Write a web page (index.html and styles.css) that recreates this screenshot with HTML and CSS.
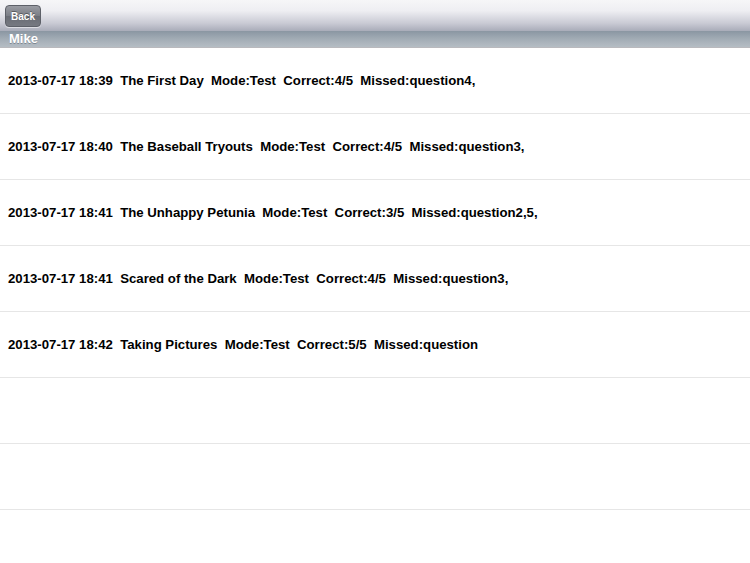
FILE: index.html
```html
<!DOCTYPE html>
<html>
<head>
<meta charset="utf-8">
<link rel="stylesheet" href="styles.css">
</head>
<body>
<div class="toolbar">
  <button class="back">Back</button>
</div>
<div class="section">Mike</div>
<ul class="list">
  <li class="row">2013-07-17 18:39  The First Day  Mode:Test  Correct:4/5  Missed:question4,</li>
  <li class="row">2013-07-17 18:40  The Baseball Tryouts  Mode:Test  Correct:4/5  Missed:question3,</li>
  <li class="row">2013-07-17 18:41  The Unhappy Petunia  Mode:Test  Correct:3/5  Missed:question2,5,</li>
  <li class="row">2013-07-17 18:41  Scared of the Dark  Mode:Test  Correct:4/5  Missed:question3,</li>
  <li class="row">2013-07-17 18:42  Taking Pictures  Mode:Test  Correct:5/5  Missed:question</li>
  <li class="row"></li>
  <li class="row"></li>
</ul>
</body>
</html>
```
FILE: styles.css
```css
html, body {
  margin: 0;
  padding: 0;
  background: #ffffff;
  font-family: "Liberation Sans", Arial, sans-serif;
  width: 750px;
  height: 563px;
  overflow: hidden;
}
.toolbar {
  height: 31px;
  box-sizing: border-box;
  padding: 5px 0 0 5px;
  background: linear-gradient(to bottom, #f6f6f8 0%, #eeeef2 35%, #c9cad4 75%, #a9acb9 100%);
  display: flex;
  align-items: flex-start;
}
.back {
  width: 36px;
  height: 22px;
  padding: 0;
  margin: 0;
  border: 1px solid #5d6068;
  border-radius: 4px;
  background: linear-gradient(to bottom, #9a9ca3 0%, #7a7d85 50%, #696c74 51%, #767981 100%);
  color: #ffffff;
  font-family: "Liberation Sans", Arial, sans-serif;
  font-weight: bold;
  font-size: 10px;
  text-shadow: 0 -1px 0 rgba(0,0,0,0.35);
  box-shadow: 0 1px 0 rgba(255,255,255,0.5);
}
.section {
  height: 17px;
  box-sizing: border-box;
  padding-left: 9px;
  background: linear-gradient(to bottom, #8a96a2 0%, #a2acb5 50%, #b5bdc4 100%);
  border-bottom: 1px solid #b9b9bd;
  color: #ffffff;
  font-weight: bold;
  font-size: 13px;
  line-height: 16px;
  text-shadow: 0 1px 0 rgba(80,90,100,0.5);
}
.list {
  list-style: none;
  margin: 0;
  padding: 0;
}
.row {
  height: 66px;
  box-sizing: border-box;
  border-bottom: 1px solid #e6e6e6;
  padding-left: 8px;
  display: flex;
  align-items: center;
  white-space: pre;
  font-weight: bold;
  font-size: 13.2px;
  color: #000000;
}
```
